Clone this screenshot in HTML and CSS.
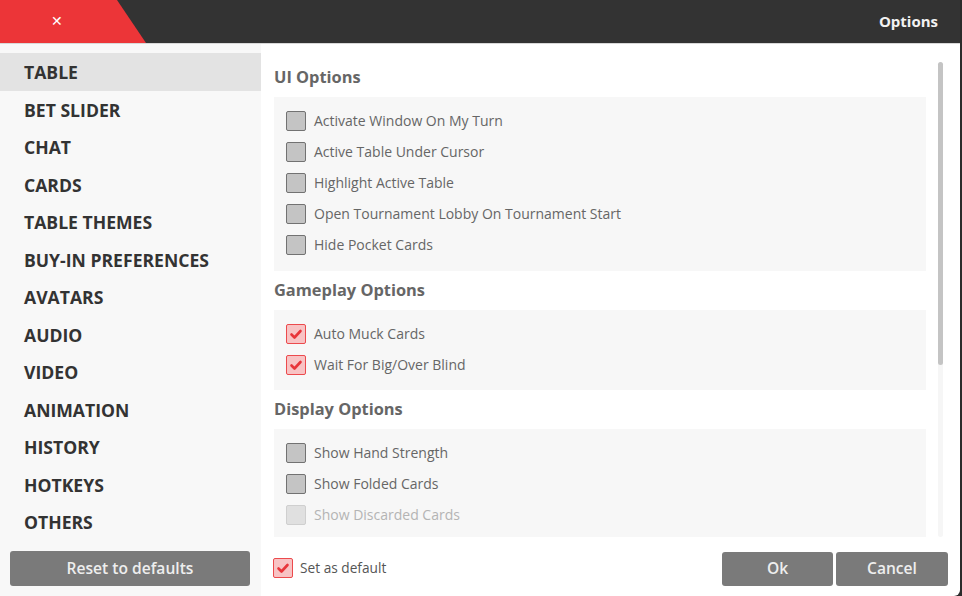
FILE: index.html
```html
<!DOCTYPE html>
<html>
<head>
<meta charset="utf-8">
<link rel="stylesheet" href="styles.css">
</head>
<body>
<div class="window">
  <header class="titlebar">
    <div class="close-tab"><span class="close-x">✕</span></div>
    <div class="title">Options</div>
  </header>
  <div class="main">
    <nav class="sidebar">
      <ul class="menu">
        <li class="menu-item active">TABLE</li>
        <li class="menu-item">BET SLIDER</li>
        <li class="menu-item">CHAT</li>
        <li class="menu-item">CARDS</li>
        <li class="menu-item">TABLE THEMES</li>
        <li class="menu-item">BUY-IN PREFERENCES</li>
        <li class="menu-item">AVATARS</li>
        <li class="menu-item">AUDIO</li>
        <li class="menu-item">VIDEO</li>
        <li class="menu-item">ANIMATION</li>
        <li class="menu-item">HISTORY</li>
        <li class="menu-item">HOTKEYS</li>
        <li class="menu-item">OTHERS</li>
      </ul>
      <button class="btn btn-reset">Reset to defaults</button>
    </nav>
    <section class="content">
      <div class="scroll-area">
        <div class="scroll-inner">
          <h2 class="section-title">UI Options</h2>
          <div class="panel">
            <label class="row"><span class="cb"></span><span class="row-text">Activate Window On My Turn</span></label>
            <label class="row"><span class="cb"></span><span class="row-text">Active Table Under Cursor</span></label>
            <label class="row"><span class="cb"></span><span class="row-text">Highlight Active Table</span></label>
            <label class="row"><span class="cb"></span><span class="row-text">Open Tournament Lobby On Tournament Start</span></label>
            <label class="row"><span class="cb"></span><span class="row-text">Hide Pocket Cards</span></label>
          </div>
          <h2 class="section-title">Gameplay Options</h2>
          <div class="panel panel-short">
            <label class="row"><span class="cb checked"><svg viewBox="0 0 20 20" width="20" height="20"><polyline points="5.5,10.5 8.5,13.5 14.5,7" /></svg></span><span class="row-text">Auto Muck Cards</span></label>
            <label class="row"><span class="cb checked"><svg viewBox="0 0 20 20" width="20" height="20"><polyline points="5.5,10.5 8.5,13.5 14.5,7" /></svg></span><span class="row-text">Wait For Big/Over Blind</span></label>
          </div>
          <h2 class="section-title">Display Options</h2>
          <div class="panel panel-last">
            <label class="row"><span class="cb"></span><span class="row-text">Show Hand Strength</span></label>
            <label class="row"><span class="cb"></span><span class="row-text">Show Folded Cards</span></label>
            <label class="row disabled"><span class="cb"></span><span class="row-text">Show Discarded Cards</span></label>
          </div>
        </div>
        <div class="scrollbar"><div class="thumb"></div></div>
      </div>
      <footer class="footer">
        <label class="row default-row"><span class="cb checked"><svg viewBox="0 0 20 20" width="20" height="20"><polyline points="5.5,10.5 8.5,13.5 14.5,7" /></svg></span><span class="row-text">Set as default</span></label>
        <div class="actions">
          <button class="btn btn-ok">Ok</button>
          <button class="btn btn-cancel">Cancel</button>
        </div>
      </footer>
    </section>
  </div>
</div>
</body>
</html>
```
FILE: styles.css
```css
* { box-sizing: border-box; }
html, body { margin: 0; padding: 0; }
body {
  width: 962px;
  height: 596px;
  background: #2b2b2b;
  font-family: "Open Sans", "Liberation Sans", sans-serif;
  overflow: hidden;
}
.window {
  width: 960px;
  height: 596px;
  background: #fff;
  display: flex;
  flex-direction: column;
  border-radius: 0 0 6px 0;
  overflow: hidden;
}
.titlebar {
  height: 44px;
  flex: 0 0 44px;
  background: #333;
  border-bottom: 1px solid #d8d8d8;
  display: flex;
  align-items: center;
  justify-content: space-between;
}
.close-tab {
  width: 146px;
  height: 43px;
  background: #ec3538;
  clip-path: polygon(0 0, 117px 0, 146px 100%, 0 100%);
  display: flex;
  align-items: center;
  padding-left: 51px;
  padding-bottom: 1px;
}
.close-x {
  color: #fff;
  font-size: 14px;
  font-weight: 700;
  font-family: "DejaVu Sans", sans-serif;
}
.title {
  color: #f2f2f2;
  font-weight: 700;
  font-size: 15px;
  padding-right: 22px;
  padding-bottom: 2px;
}
.main {
  flex: 1;
  display: flex;
  min-height: 0;
}
.sidebar {
  width: 261px;
  flex: 0 0 261px;
  background: #f8f8f8;
  display: flex;
  flex-direction: column;
  padding-top: 9px;
}
.menu {
  list-style: none;
  margin: 0;
  padding: 0;
}
.menu-item {
  height: 37.5px;
  line-height: 38.5px;
  padding-left: 24px;
  font-size: 17.6px;
  font-weight: 700;
  color: #333;
}
.menu-item.active { background: #e3e3e3; }
.btn {
  border: none;
  border-radius: 3px;
  background: #7a7a7a;
  color: #eeeeee;
  font-family: "Open Sans", "Liberation Sans", sans-serif;
  font-size: 15.6px;
  font-weight: 600;
  padding: 0 0 2px;
}
.btn-reset {
  margin: auto 11px 10px 10px;
  height: 35px;
}
.content {
  flex: 1;
  display: flex;
  flex-direction: column;
  min-width: 0;
}
.scroll-area {
  flex: 0 0 493px;
  display: flex;
  overflow: hidden;
  padding-left: 13px;
}
.scroll-inner {
  flex: 1;
  padding-top: 14px;
  overflow: hidden;
}
.section-title {
  margin: 9px 0 10px;
  font-size: 16.4px;
  line-height: 20px;
  font-weight: 700;
  color: #666;
}
.panel {
  background: #f7f7f7;
  padding: 14px 12px 16px;
  display: flex;
  flex-direction: column;
  gap: 11px;
}
.panel-short { padding-bottom: 15px; }
.panel-last { padding-bottom: 30px; }
.row {
  display: flex;
  align-items: center;
  gap: 8px;
  height: 20px;
}
.row-text {
  font-size: 14px;
  line-height: 19px;
  color: #666;
  margin-bottom: 1px;
}
.cb {
  width: 20px;
  height: 20px;
  flex: 0 0 20px;
  border: 1.5px solid #727272;
  background: #c4c4c4;
  border-radius: 2px;
  position: relative;
}
.cb svg {
  position: absolute;
  left: -1.5px;
  top: -1.5px;
}
.cb svg polyline {
  fill: none;
  stroke: #e8353a;
  stroke-width: 2.6;
  stroke-linecap: round;
  stroke-linejoin: round;
}
.cb.checked {
  background: #f8c3c4;
  border-color: #ec4a4d;
}
.row.disabled .cb {
  background: #e0e0e0;
  border-color: #cfcfcf;
}
.row.disabled .row-text { color: #b4b4b4; }
.scrollbar {
  width: 5px;
  flex: 0 0 5px;
  margin: 18px 17px 0 12px;
  background: #f6f6f6;
  border-radius: 3px;
}
.thumb {
  height: 303px;
  background: #c4c4c4;
  border-radius: 3px;
}
.footer {
  flex: 1;
  display: flex;
  align-items: center;
  justify-content: space-between;
  padding: 5px 12px 0 12px;
}
.default-row { gap: 7px; margin-top: -2px; }
.default-row .row-text { color: #555; font-size: 13.7px; margin-bottom: 0; line-height: 20px; }
.actions {
  display: flex;
  gap: 3px;
}
.btn-ok { width: 111px; height: 34px; }
.btn-cancel { width: 112px; height: 34px; }
```
